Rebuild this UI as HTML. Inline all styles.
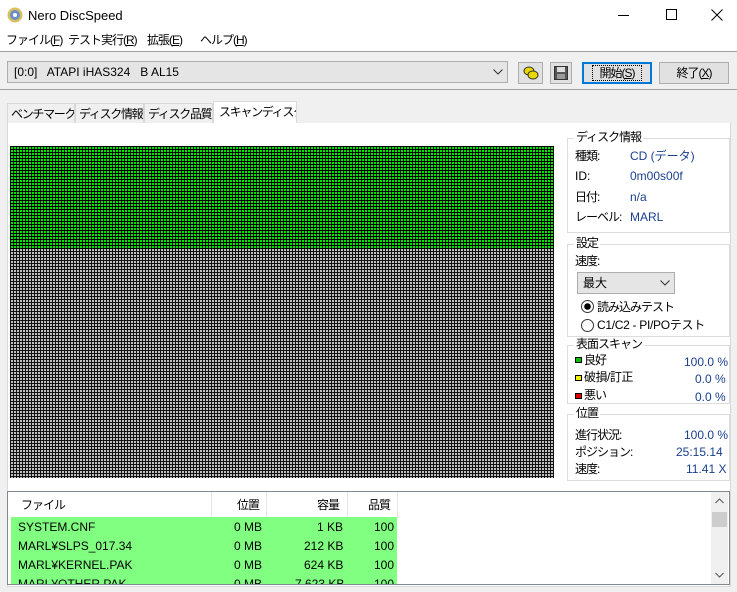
<!DOCTYPE html>
<html><head><meta charset="utf-8"><style>
*{margin:0;padding:0;box-sizing:border-box}
body{width:737px;height:592px;background:#f0f0f0;font-family:"Liberation Sans","Noto Sans CJK JP",sans-serif;font-size:12px;line-height:15px;color:#000;position:relative;overflow:hidden}
.a{position:absolute;white-space:nowrap}
.j{letter-spacing:-1px}
.blue{color:#1a3f8f}
.grp{position:absolute;border:1px solid #dcdcdc}
.gt{position:absolute;top:-9px;left:6px;background:#fff;padding:0 2px;font-size:12px;letter-spacing:-1px;white-space:nowrap}
.btn{position:absolute;background:#e1e1e1;border:1px solid #adadad;text-align:center;line-height:20px;white-space:nowrap}
.tab{position:absolute;height:21px;border:1px solid #d9d9d9;border-bottom:none;padding:3px 0 0 3px;letter-spacing:-1.3px;overflow:hidden;white-space:nowrap}
</style></head><body>
<div class="a" style="left:0;top:0;width:737px;height:51px;background:#fff"></div>
<svg class="a" style="left:7px;top:7px" width="16" height="16"><circle cx="8" cy="8" r="7.5" fill="#d8c060"/><circle cx="8" cy="8" r="5" fill="#6a90c8"/><circle cx="8" cy="8" r="2" fill="#fff"/></svg>
<div class="a" style="left:28px;top:8px;font-size:13px">Nero DiscSpeed</div>
<div class="a" style="left:618px;top:15px;width:11px;height:1px;background:#000"></div>
<div class="a" style="left:666px;top:9px;width:11px;height:11px;border:1px solid #000"></div>
<svg class="a" style="left:711px;top:9px" width="12" height="12"><path d="M0.5 0.5L11.5 11.5M11.5 0.5L0.5 11.5" stroke="#000"/></svg>
<div class="a j" style="left:6px;top:33px">ファイル(<u>F</u>)</div>
<div class="a j" style="left:68px;top:33px">テスト実行(<u>R</u>)</div>
<div class="a j" style="left:147px;top:33px">拡張(<u>E</u>)</div>
<div class="a j" style="left:200px;top:33px">ヘルプ(<u>H</u>)</div>
<div class="a" style="left:0;top:51px;width:737px;height:1px;background:#a0a0a0"></div>
<div class="a" style="left:7px;top:61px;width:501px;height:22px;background:#e5e5e5;border:1px solid #adadad"></div>
<div class="a" style="left:14px;top:65px">[0:0]&nbsp;&nbsp; ATAPI iHAS324&nbsp;&nbsp; B AL15</div>
<svg class="a" style="left:493px;top:69px" width="10" height="6"><path d="M0.5 0.5L5 5L9.5 0.5" stroke="#333" fill="none"/></svg>
<div class="btn" style="left:518px;top:62px;width:25px;height:22px"></div>
<svg class="a" style="left:522px;top:64px" width="18" height="18"><ellipse cx="7" cy="7" rx="5" ry="4" fill="#e8d800" stroke="#333"/><ellipse cx="11" cy="11" rx="5" ry="4" fill="#e8d800" stroke="#333"/></svg>
<div class="btn" style="left:550px;top:62px;width:22px;height:22px"></div>
<svg class="a" style="left:554px;top:66px" width="14" height="14"><rect x="0.5" y="0.5" width="13" height="13" fill="#555" stroke="#333"/><rect x="3" y="1" width="8" height="5" fill="#ddd"/><rect x="3" y="8" width="8" height="5" fill="#999"/></svg>
<div class="btn j" style="left:582px;top:62px;width:70px;height:22px;border:2px solid #0078d7;line-height:18px"><span style="outline:1px dotted #000;padding:0 6px">開始(<u>S</u>)</span></div>
<div class="btn j" style="left:659px;top:62px;width:70px;height:22px">終了(<u>X</u>)</div>
<div class="a" style="left:0;top:89px;width:737px;height:1px;background:#a0a0a0"></div>
<div class="tab" style="left:7px;top:103px;width:68px">ベンチマーク</div>
<div class="tab" style="left:75px;top:103px;width:69px">ディスク情報</div>
<div class="tab" style="left:144px;top:103px;width:69px">ディスク品質</div>
<div class="tab" style="left:213px;top:101px;width:84px;height:23px;background:#fff;padding-left:5px">スキャンディスク</div>
<div class="a" style="left:7px;top:123px;width:724px;height:464px;background:#fff;border:1px solid #d9d9d9;border-top:none"></div>
<svg class="a" style="left:10px;top:146px" width="544" height="332">
<defs><pattern id="g" width="3" height="3" patternUnits="userSpaceOnUse"><rect width="3" height="3" fill="#000"/><rect x="1" y="1" width="2" height="2" fill="#00e600"/></pattern>
<pattern id="s" width="3" height="3" patternUnits="userSpaceOnUse"><rect width="3" height="3" fill="#111"/><rect x="1" y="1" width="2" height="2" fill="#c0c0c0"/></pattern></defs>
<rect width="544" height="103" fill="url(#g)"/><rect y="103" width="544" height="229" fill="url(#s)"/></svg>
<div class="grp" style="left:567px;top:138px;width:163px;height:95px"><div class="gt">ディスク情報</div></div>
<div class="a j" style="left:575px;top:149px">種類:</div><div class="a blue" style="left:630px;top:149px">CD (データ)</div>
<div class="a" style="left:575px;top:169px">ID:</div><div class="a blue" style="left:630px;top:169px">0m00s00f</div>
<div class="a j" style="left:575px;top:190px">日付:</div><div class="a blue" style="left:630px;top:190px">n/a</div>
<div class="a j" style="left:575px;top:210px">レーベル:</div><div class="a blue" style="left:630px;top:210px">MARL</div>
<div class="grp" style="left:567px;top:244px;width:163px;height:93px"><div class="gt">設定</div></div>
<div class="a j" style="left:575px;top:254px">速度:</div>
<div class="a" style="left:577px;top:272px;width:98px;height:22px;background:#e5e5e5;border:1px solid #adadad;padding:3px 0 0 5px">最大</div>
<svg class="a" style="left:660px;top:280px" width="10" height="6"><path d="M0.5 0.5L5 5L9.5 0.5" stroke="#333" fill="none"/></svg>
<svg class="a" style="left:581px;top:300px" width="13" height="13"><circle cx="6.5" cy="6.5" r="6" fill="#fff" stroke="#333"/><circle cx="6.5" cy="6.5" r="3.3" fill="#000"/></svg>
<div class="a j" style="left:597px;top:300px">読み込みテスト</div>
<svg class="a" style="left:581px;top:319px" width="13" height="13"><circle cx="6.5" cy="6.5" r="6" fill="#fff" stroke="#333"/></svg>
<div class="a" style="left:597px;top:318px;letter-spacing:-0.3px">C1/C2 - PI/POテスト</div>
<div class="grp" style="left:567px;top:345px;width:163px;height:59px"><div class="gt">表面スキャン</div></div>
<div class="a" style="left:575px;top:357px;width:7px;height:6px;background:#00c000;border:1px solid #000"></div><div class="a j" style="left:584px;top:353px">良好</div><div class="a blue" style="left:684px;top:355px">100.0 %</div>
<div class="a" style="left:575px;top:375px;width:7px;height:6px;background:#f0f000;border:1px solid #000"></div><div class="a" style="left:584px;top:370px;letter-spacing:-0.5px">破損/訂正</div><div class="a blue" style="left:695px;top:372px">0.0 %</div>
<div class="a" style="left:575px;top:393px;width:7px;height:6px;background:#e00000;border:1px solid #000"></div><div class="a j" style="left:584px;top:388px">悪い</div><div class="a blue" style="left:695px;top:390px">0.0 %</div>
<div class="grp" style="left:567px;top:414px;width:163px;height:67px"><div class="gt">位置</div></div>
<div class="a j" style="left:575px;top:428px">進行状況:</div><div class="a blue" style="left:684px;top:428px">100.0 %</div>
<div class="a j" style="left:575px;top:445px">ポジション:</div><div class="a blue" style="left:676px;top:445px">25:15.14</div>
<div class="a j" style="left:575px;top:462px">速度:</div><div class="a blue" style="left:686px;top:462px">11.41 X</div>
<div class="a" style="left:7px;top:491px;width:723px;height:94px;background:#fff;border:1px solid #828790;overflow:hidden">
<div class="a" style="left:203px;top:0;width:1px;height:26px;background:#e5e5e5"></div>
<div class="a" style="left:258px;top:0;width:1px;height:26px;background:#e5e5e5"></div>
<div class="a" style="left:339px;top:0;width:1px;height:26px;background:#e5e5e5"></div>
<div class="a" style="left:389px;top:0;width:1px;height:26px;background:#e5e5e5"></div>
<div class="a j" style="left:13px;top:6px">ファイル</div><div class="a j" style="left:229px;top:6px">位置</div><div class="a j" style="left:309px;top:6px">容量</div><div class="a j" style="left:360px;top:6px">品質</div>
<div class="a" style="left:3px;top:25px;width:386px;height:70px;background:#80ff80"></div>
<div class="a" style="left:10px;top:28px">SYSTEM.CNF</div><div class="a" style="left:226px;top:28px">0 MB</div><div class="a" style="left:309px;top:28px">1 KB</div><div class="a" style="left:366px;top:28px">100</div>
<div class="a" style="left:10px;top:47px">MARL¥SLPS_017.34</div><div class="a" style="left:226px;top:47px">0 MB</div><div class="a" style="left:296px;top:47px">212 KB</div><div class="a" style="left:366px;top:47px">100</div>
<div class="a" style="left:10px;top:66px">MARL¥KERNEL.PAK</div><div class="a" style="left:226px;top:66px">0 MB</div><div class="a" style="left:296px;top:66px">624 KB</div><div class="a" style="left:366px;top:66px">100</div>
<div class="a" style="left:10px;top:85px">MARL¥OTHER.PAK</div><div class="a" style="left:226px;top:85px">0 MB</div><div class="a" style="left:287px;top:85px">7,623 KB</div><div class="a" style="left:366px;top:85px">100</div>
<div class="a" style="left:703px;top:0;width:17px;height:92px;background:#f0f0f0"></div>
<div class="a" style="left:704px;top:20px;width:15px;height:15px;background:#cdcdcd"></div>
<svg class="a" style="left:707px;top:6px" width="9" height="6"><path d="M0.5 5L4.5 1L8.5 5" stroke="#555" fill="none"/></svg>
<svg class="a" style="left:707px;top:80px" width="9" height="6"><path d="M0.5 1L4.5 5L8.5 1" stroke="#555" fill="none"/></svg>
</div>
</body></html>
